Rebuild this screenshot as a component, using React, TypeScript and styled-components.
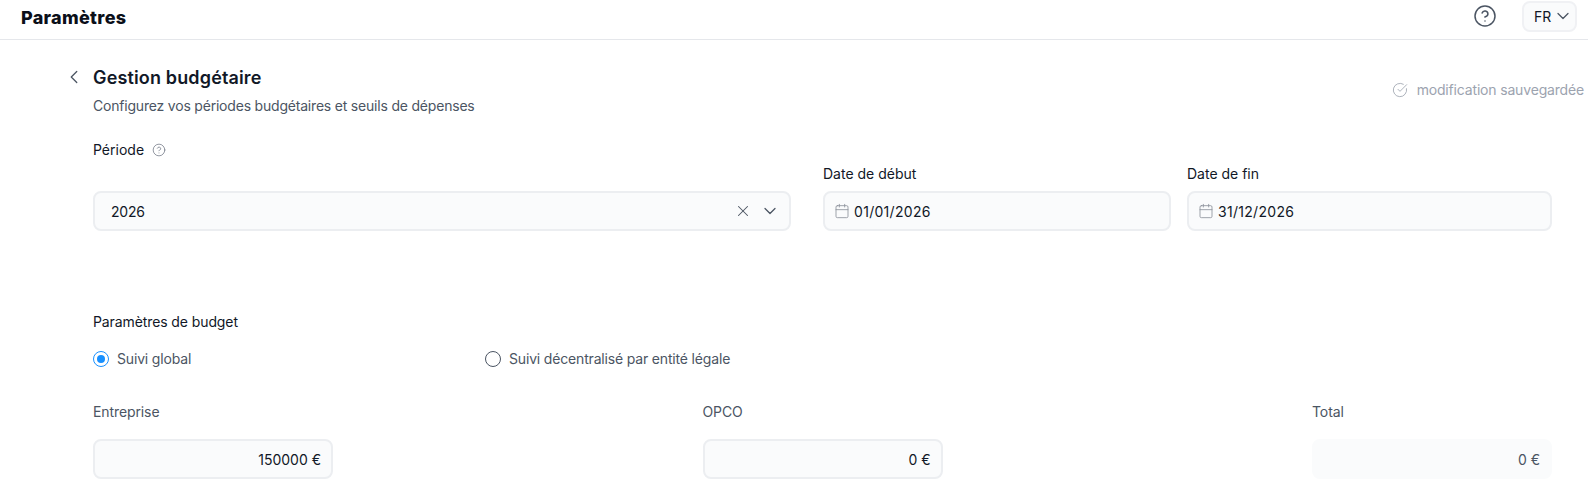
import styled, { createGlobalStyle } from 'styled-components';
import { Calendar, ChevronDown, ChevronLeft, CircleCheckBig, CircleHelp, X } from 'lucide-react';

const GlobalStyle = createGlobalStyle`
  html, body {
    margin: 0;
    height: 498px;
    overflow: hidden;
    background: #fff;
    font-family: Inter, 'Liberation Sans', sans-serif;
    color: #111827;
  }
`;

const Header = styled.header`
  height: 39px;
  border-bottom: 1px solid #e5e7eb;
  display: flex;
  align-items: center;
  justify-content: space-between;
  padding: 0 11px 0 21px;
`;

const PageTitle = styled.h1`
  margin: 0 0 4px;
  font-size: 18px;
  line-height: 28px;
  font-weight: 800;
  letter-spacing: 0.3px;
  color: #0b0f19;
`;

const HeaderActions = styled.div`
  display: flex;
  align-items: center;
  gap: 25px;
  color: #4b5563;
  margin-bottom: 7px;
`;

const LangButton = styled.div`
  width: 55px;
  height: 31px;
  box-sizing: border-box;
  border: 2px solid #f0f1f4;
  border-radius: 8px;
  background: #fafbfc;
  display: flex;
  align-items: center;
  gap: 2px;
  padding-left: 10px;
  font-size: 14px;
  color: #111827;
  svg { color: #4b5563; }
`;

const Main = styled.main`
  padding: 26px 4px 0 64px;
`;

const TitleRow = styled.div`
  display: flex;
  justify-content: space-between;
  align-items: flex-start;
`;

const TitleGroup = styled.div`
  display: flex;
  gap: 10px;
`;

const BackIcon = styled.div`
  width: 19px;
  height: 22px;
  display: flex;
  align-items: center;
  justify-content: center;
  color: #4b5563;
`;

const SectionTitle = styled.h2`
  margin: 0;
  font-size: 18px;
  line-height: 24px;
  font-weight: 600;
  letter-spacing: 0.15px;
  color: #111827;
`;

const Subtitle = styled.p`
  margin: 6px 0 0;
  font-size: 14px;
  line-height: 20px;
  letter-spacing: -0.2px;
  color: #4b5563;
`;

const SavedStatus = styled.div`
  display: flex;
  align-items: center;
  gap: 9px;
  margin-top: 14px;
  font-size: 14px;
  line-height: 20px;
  letter-spacing: -0.17px;
  color: #9ca3af;
`;

const Form = styled.div`
  padding: 0 32px 0 29px;
`;

const PeriodLabel = styled.div`
  margin-top: 24px;
  display: flex;
  align-items: center;
  gap: 8px;
  font-size: 14px;
  line-height: 20px;
  color: #111827;
  svg { color: #6b7280; }
`;

const PeriodGrid = styled.div`
  display: grid;
  grid-template-columns: 698px 380px 1fr;
  align-items: end;
  margin-top: 4px;
`;

const FieldLabel = styled.div`
  font-size: 14px;
  line-height: 20px;
  margin-bottom: 7px;
  color: #111827;
`;

const DateColumn = styled.div<{ $offset: number }>`
  margin-left: ${(p) => p.$offset}px;
`;

const Box = styled.div`
  height: 40px;
  box-sizing: border-box;
  border: 2px solid #eceef1;
  border-radius: 8px;
  background: #fafbfc;
  display: flex;
  align-items: center;
  font-size: 14px;
  color: #111827;
`;

const SelectBox = styled(Box)`
  padding: 0 9px 0 16px;
  justify-content: space-between;
  letter-spacing: -0.2px;
`;

const SelectIcons = styled.div`
  display: flex;
  align-items: center;
  gap: 8px;
  color: #4b5563;
`;

const DateBox = styled(Box)`
  padding-left: 9px;
  gap: 4px;
  letter-spacing: 0.3px;
  svg { color: #8b909a; }
`;

const BudgetTitle = styled.div`
  margin-top: 81px;
  font-size: 14px;
  line-height: 20px;
  letter-spacing: -0.1px;
  color: #111827;
`;

const RadioRow = styled.div`
  display: grid;
  grid-template-columns: 392px 1fr;
  margin-top: 17px;
`;

const RadioItem = styled.div`
  display: flex;
  align-items: center;
  gap: 8px;
  font-size: 14px;
  line-height: 20px;
  letter-spacing: -0.17px;
  color: #4b5563;
`;

const RadioDot = styled.span<{ $checked?: boolean }>`
  width: 16px;
  height: 16px;
  box-sizing: border-box;
  border-radius: 50%;
  border: 1px solid ${(p) => (p.$checked ? '#1890ff' : '#4b5563')};
  display: flex;
  align-items: center;
  justify-content: center;
  &::after {
    content: '';
    display: ${(p) => (p.$checked ? 'block' : 'none')};
    width: 8px;
    height: 8px;
    border-radius: 50%;
    background: #1890ff;
  }
`;

const AmountRow = styled.div`
  display: flex;
  justify-content: space-between;
  margin-top: 33px;
`;

const AmountField = styled.div`
  width: 240px;
`;

const AmountLabel = styled.div`
  font-size: 14px;
  line-height: 20px;
  letter-spacing: -0.1px;
  color: #4b5563;
  margin-bottom: 17px;
`;

const AmountBox = styled(Box)<{ $disabled?: boolean }>`
  justify-content: flex-end;
  padding-right: 10px;
  ${(p) => p.$disabled && 'border-color: #fafbfc; color: #4b5563;'}
`;

const amounts = [
  { label: 'Entreprise', value: '150000 €' },
  { label: 'OPCO', value: '0 €' },
  { label: 'Total', value: '0 €', disabled: true },
];

export default function App() {
  return (
    <>
      <GlobalStyle />
      <Header>
        <PageTitle>Paramètres</PageTitle>
        <HeaderActions>
          <CircleHelp size={24} strokeWidth={1.5} />
          <LangButton>
            FR
            <ChevronDown size={20} strokeWidth={1.5} />
          </LangButton>
        </HeaderActions>
      </Header>
      <Main>
        <TitleRow>
          <TitleGroup>
            <BackIcon>
              <ChevronLeft size={22} strokeWidth={1.4} style={{ flexShrink: 0 }} />
            </BackIcon>
            <div>
              <SectionTitle>Gestion budgétaire</SectionTitle>
              <Subtitle>Configurez vos périodes budgétaires et seuils de dépenses</Subtitle>
            </div>
          </TitleGroup>
          <SavedStatus>
            <CircleCheckBig size={16} strokeWidth={1.25} />
            modification sauvegardée
          </SavedStatus>
        </TitleRow>
        <Form>
          <PeriodLabel>
            Période
            <CircleHelp size={14} strokeWidth={1.25} />
          </PeriodLabel>
          <PeriodGrid>
            <SelectBox>
              2026
              <SelectIcons>
                <X size={18} strokeWidth={1.4} />
                <ChevronDown size={20} strokeWidth={1.5} />
              </SelectIcons>
            </SelectBox>
            <DateColumn $offset={32}>
              <FieldLabel>Date de début</FieldLabel>
              <DateBox>
                <Calendar size={16} strokeWidth={1.25} />
                01/01/2026
              </DateBox>
            </DateColumn>
            <DateColumn $offset={16}>
              <FieldLabel>Date de fin</FieldLabel>
              <DateBox>
                <Calendar size={16} strokeWidth={1.25} />
                31/12/2026
              </DateBox>
            </DateColumn>
          </PeriodGrid>
          <BudgetTitle>Paramètres de budget</BudgetTitle>
          <RadioRow>
            <RadioItem>
              <RadioDot $checked />
              Suivi global
            </RadioItem>
            <RadioItem>
              <RadioDot />
              Suivi décentralisé par entité légale
            </RadioItem>
          </RadioRow>
          <AmountRow>
            {amounts.map((a) => (
              <AmountField key={a.label}>
                <AmountLabel>{a.label}</AmountLabel>
                <AmountBox $disabled={a.disabled}>{a.value}</AmountBox>
              </AmountField>
            ))}
          </AmountRow>
        </Form>
      </Main>
    </>
  );
}
